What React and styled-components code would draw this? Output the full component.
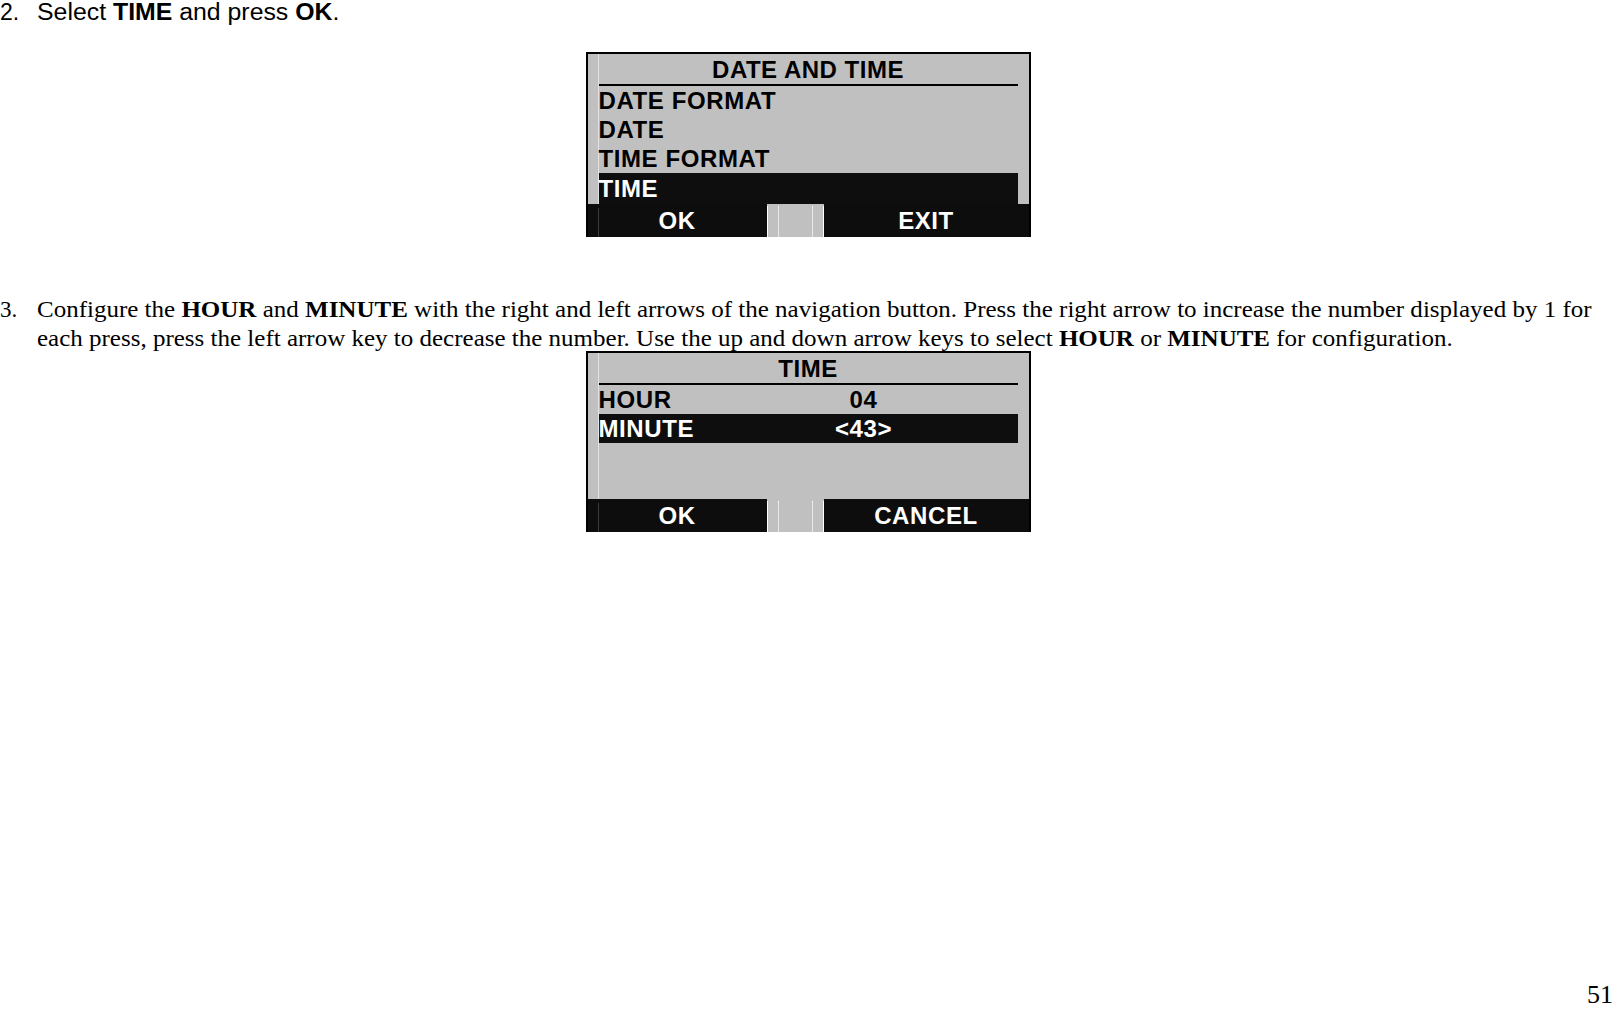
import React from 'react';
import styled, { createGlobalStyle } from 'styled-components';

const GlobalStyle = createGlobalStyle`
  html, body {
    margin: 0;
    padding: 0;
    background: #fff;
  }
  body {
    font-family: "Liberation Serif", "Times New Roman", serif;
    color: #000;
  }
`;

const Page = styled.div`
  width: 1616px;
  height: 1009px;
  overflow: hidden;
  display: flex;
  flex-direction: column;
  box-sizing: border-box;
`;

const Step = styled.div`
  display: grid;
  grid-template-columns: 37px 1fr;
  font-family: ${(p) => (p.$sans ? '"Liberation Sans", Arial, sans-serif' : '"Liberation Serif", "Times New Roman", serif')};
  font-size: ${(p) => p.$size}px;
  line-height: ${(p) => p.$lh}px;
  margin-top: ${(p) => p.$top || 0}px;
  b {
    font-weight: bold;
  }
`;

const StepText = styled.div`
  white-space: nowrap;
  transform: scaleX(${(p) => p.$sx || 1});
  transform-origin: left center;
`;

const Screen = styled.div`
  align-self: center;
  width: 445px;
  height: ${(p) => p.$h}px;
  margin-top: ${(p) => p.$top}px;
  box-sizing: border-box;
  border: 2px solid #000;
  background: #c0c0c0;
  display: flex;
  flex-direction: column;
  font-family: "Liberation Sans", Arial, sans-serif;
  font-weight: bold;
  font-size: 24px;
  letter-spacing: 0.6px;
  color: #000;
`;

const Body = styled.div`
  flex: 1;
  display: flex;
  flex-direction: column;
  margin-left: 10px;
  margin-right: 11px;
  border-left: 1px solid #e2e2e2;
`;

const Title = styled.div`
  height: 30px;
  line-height: 31px;
  text-align: center;
  letter-spacing: 0.5px;
  border-bottom: 2px solid #000;
`;

const Row = styled.div`
  height: ${(p) => p.$h || 29}px;
  line-height: ${(p) => p.$h || 29}px;
  display: grid;
  grid-template-columns: 200px 130px 1fr;
  background: ${(p) => (p.$active ? '#0e0e0e' : 'transparent')};
  color: ${(p) => (p.$active ? '#fff' : '#000')};
  white-space: nowrap;
`;

const Value = styled.span`
  text-align: center;
`;

const SoftKeys = styled.div`
  height: 31px;
  display: grid;
  grid-template-columns: 179px 57px 1fr;
  color: #fff;
`;

const Key = styled.div`
  background: #0d0d0d;
  text-align: center;
  line-height: 33px;
  position: relative;
  &::before {
    content: '';
    position: absolute;
    top: 4px;
    bottom: 0;
    left: 10px;
    width: 1px;
    background: ${(p) => (p.$edge ? '#3a3a3a' : 'transparent')};
  }
`;

// raised blank key between the two soft keys
const Blank = styled.div`
  background: #c0c0c0;
  margin-top: 2px;
  border-left: 1px solid #fff;
  border-right: 1px solid #fff;
  display: flex;
  justify-content: space-between;
  padding: 0 10px;
  &::before,
  &::after {
    content: '';
    width: 1px;
    border-top: 1px solid #fff;
    background: #e8e8e8;
  }
`;

const Footer = styled.div`
  margin-top: auto;
  align-self: flex-end;
  font-family: "Liberation Serif", "Times New Roman", serif;
  font-size: 26px;
  line-height: 29px;
  margin-right: 3px;
`;

function LcdScreen({ title, rows, keys, height, top }) {
  return (
    <Screen $h={height} $top={top}>
      <Body>
        <Title>{title}</Title>
        {rows.map((r, i) => (
          <Row key={i} $active={r.active} $h={r.h}>
            <span>{r.label}</span>
            <Value>{r.value}</Value>
          </Row>
        ))}
      </Body>
      <SoftKeys>
        <Key $edge>{keys[0]}</Key>
        <Blank />
        <Key>{keys[1]}</Key>
      </SoftKeys>
    </Screen>
  );
}

export default function App() {
  return (
    <Page>
      <GlobalStyle />
      <Step $sans $size={23} $lh={24}>
        <span>2.</span>
        <StepText $sx={1.08}>
          Select <b>TIME</b> and press <b>OK</b>.
        </StepText>
      </Step>

      <LcdScreen
        top={28}
        height={185}
        title="DATE AND TIME"
        keys={['OK', 'EXIT']}
        rows={[
          { label: 'DATE FORMAT' },
          { label: 'DATE' },
          { label: 'TIME FORMAT' },
          { label: 'TIME', active: true, h: 31 },
        ]}
      />

      <Step $size={23} $lh={29} $top={58}>
        <span>3.</span>
        <StepText $sx={1.087}>
          Configure the <b>HOUR</b> and <b>MINUTE</b> with the right and left arrows of the navigation button. Press the right arrow to increase the number displayed by 1 for
          <br />
          each press, press the left arrow key to decrease the number. Use the up and down arrow keys to select <b>HOUR</b> or <b>MINUTE</b> for configuration.
        </StepText>
      </Step>

      <LcdScreen
        top={-2}
        height={181}
        title="TIME"
        keys={['OK', 'CANCEL']}
        rows={[
          { label: 'HOUR', value: '04' },
          { label: 'MINUTE', value: '<43>', active: true },
        ]}
      />

      <Footer>51</Footer>
    </Page>
  );
}
